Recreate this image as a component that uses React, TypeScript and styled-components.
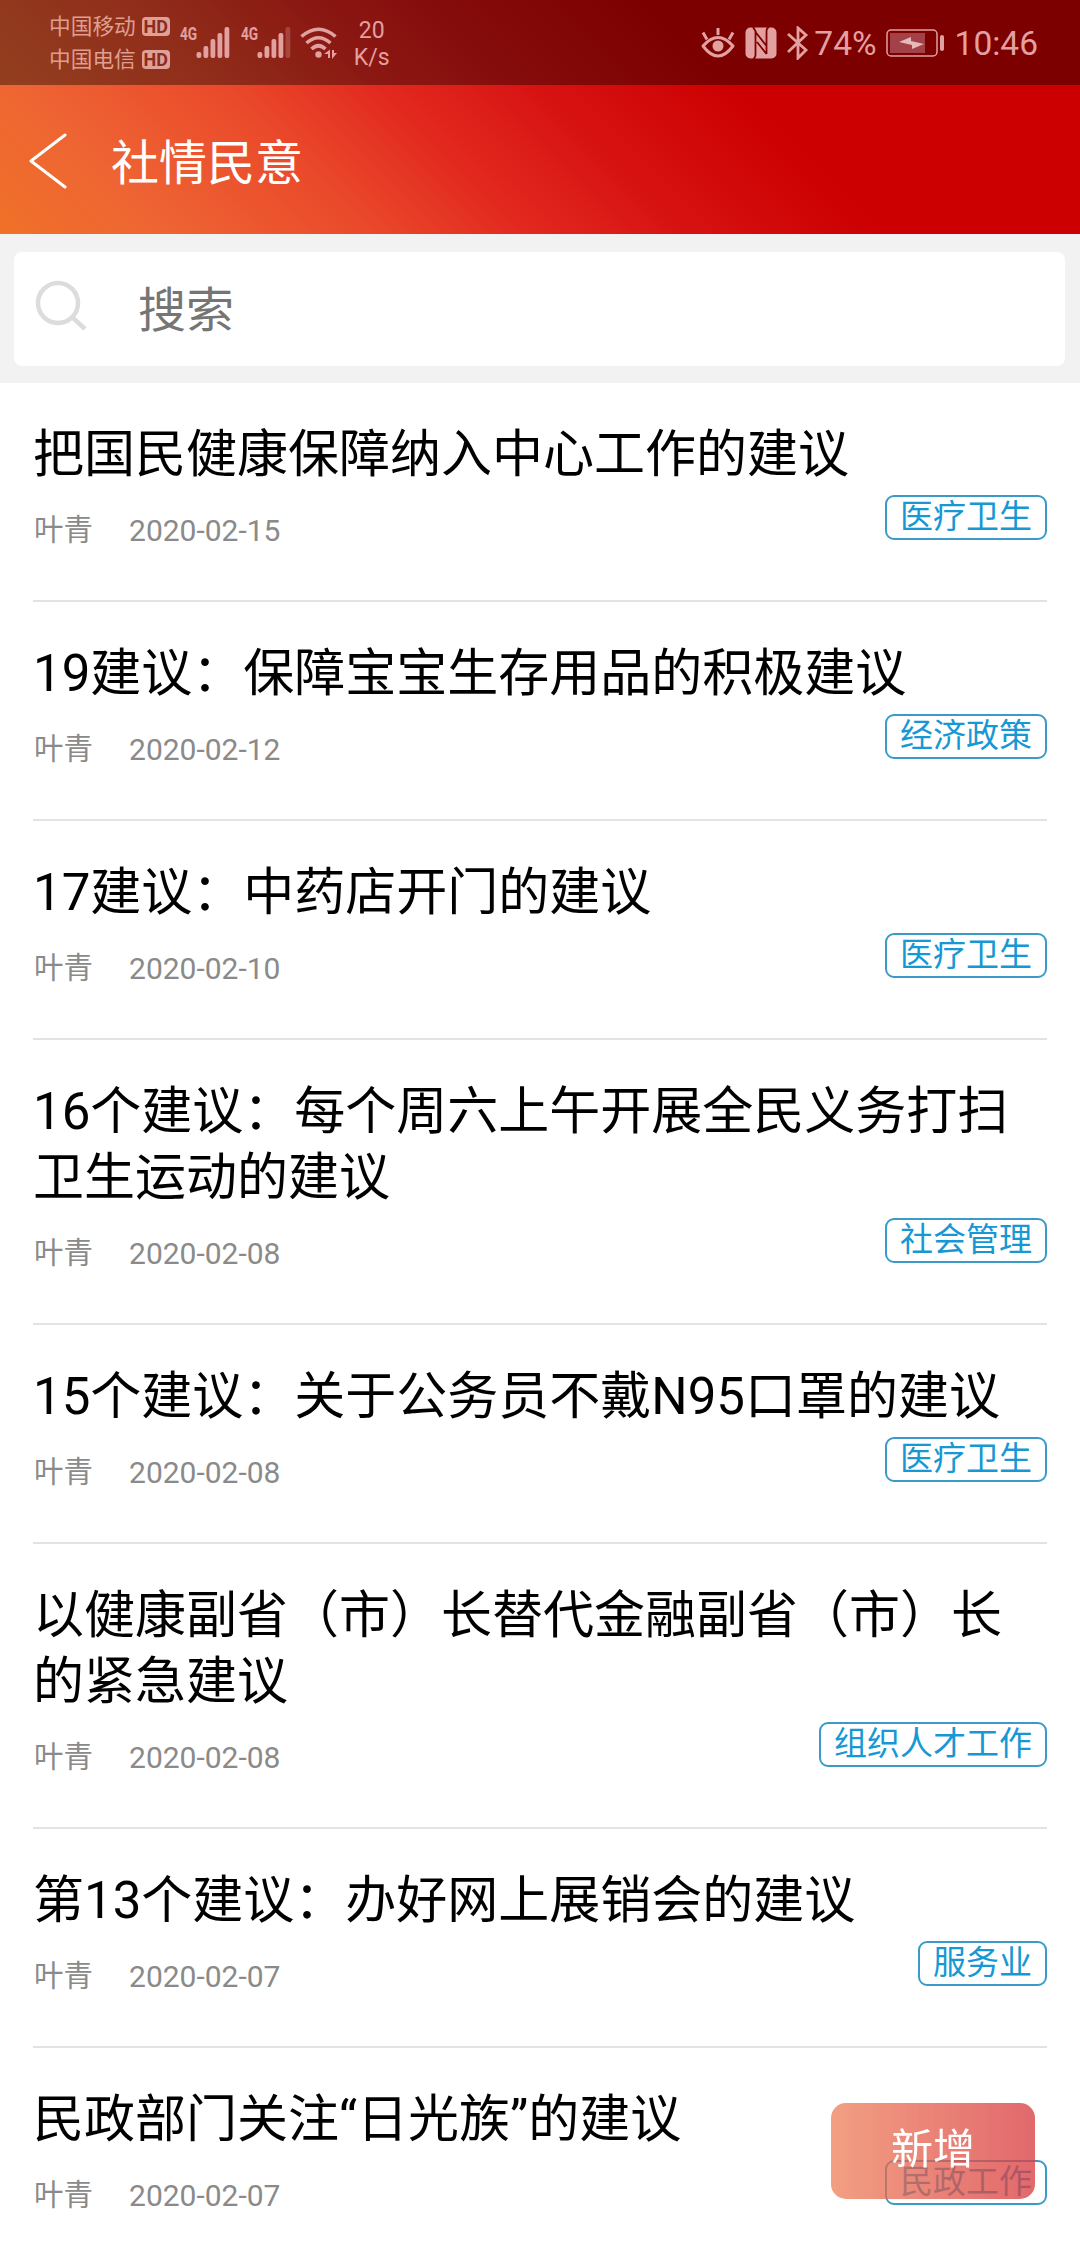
import React from "react";
import styled, { createGlobalStyle } from "styled-components";

const Global = createGlobalStyle`
  body {
    margin: 0;
    background: #fff;
    overflow: hidden;
    font-family: Roboto, "Noto Sans CJK SC", sans-serif;
  }
`;

const Screen = styled.div`
  width: 1080px;
  height: 2244px;
  overflow: hidden;
  background: #fff;
`;

const Header = styled.header`
  height: 234px;
  background: linear-gradient(45deg, #f07128 0%, #ee6433 13%, #ea4a2b 28%, #e2291f 40%, #d71312 52%, #cc0000 67%);
`;

const StatusBar = styled.div`
  height: 85px;
  box-sizing: border-box;
  padding: 0 42px 0 49px;
  display: flex;
  align-items: center;
  background: rgba(0, 0, 0, 0.385);
  color: #e2a0a0;
`;

const Carriers = styled.div`
  display: grid;
  row-gap: 1px;
  padding-top: 2px;
  margin-right: 10px;
`;

const Carrier = styled.div`
  display: flex;
  align-items: center;
  gap: 6px;
  height: 32px;
  font-size: 21.7px;
  line-height: 32px;
  color: #df9f90;
`;

const Badge = styled.span`
  width: 28px;
  height: 19px;
  margin-bottom: 2px;
  border-radius: 4px;
  background: #dfa097;
  color: #8b2c20;
  font-size: 18px;
  line-height: 20px;
  font-weight: 700;
  text-align: center;
`;

const Speed = styled.div`
  width: 36px;
  margin-left: 16px;
  padding-top: 2px;
  font-size: 23px;
  line-height: 27px;
  text-align: center;
`;

const Spacer = styled.div`
  flex: 1;
`;

const StatusText = styled.span<{ $gap: number }>`
  font-size: 33.5px;
  line-height: 40px;
  margin-left: ${(p) => p.$gap}px;
  padding-top: 2px;
`;

const StatusIcon = styled.svg<{ $gap?: number }>`
  display: block;
  flex: none;
  margin-left: ${(p) => p.$gap ?? 0}px;
`;

const TitleBar = styled.div`
  height: 149px;
  display: flex;
  align-items: center;
  padding-left: 28px;
`;

const BackIcon = styled.svg`
  display: block;
  margin: 3px 43px 0 0;
`;

const PageTitle = styled.h1`
  margin: 0;
  padding-top: 8px;
  font-size: 48px;
  line-height: 60px;
  font-weight: 400;
  color: #fff;
`;

const SearchArea = styled.div`
  height: 149px;
  box-sizing: border-box;
  padding: 18px 15px 17px 14px;
  background: #f2f2f2;
`;

const SearchBox = styled.div`
  height: 114px;
  border-radius: 8px;
  background: #fff;
  display: flex;
  align-items: center;
  padding-left: 21px;
`;

const SearchIcon = styled.svg`
  display: block;
  margin: 0 51px 8px 0;
`;

const Placeholder = styled.span`
  padding-top: 3px;
  color: #757575;
  font-size: 48px;
  line-height: 60px;
`;

const List = styled.ul`
  margin: 0;
  padding: 0 33px;
  list-style: none;
`;

const Item = styled.li`
  box-sizing: border-box;
  border-bottom: 2px solid #e3e3e3;
  padding: 39px 0 57px;
`;

const ItemTitle = styled.h2`
  margin: 0;
  font-size: 51px;
  line-height: 66px;
  font-weight: 400;
  color: #000;
`;

const Meta = styled.div`
  height: 55px;
  display: flex;
  align-items: flex-start;
  color: #8a8a8a;
  font-size: 29.5px;
  line-height: 36px;
`;

const Author = styled.span`
  padding-top: 24px;
  padding-left: 1px;
  margin-right: 36px;
`;

const DateText = styled.span`
  flex: 1;
  padding-top: 25px;
  font-size: 30px;
`;

const Tag = styled.span`
  box-sizing: border-box;
  height: 45px;
  margin-top: 7px;
  padding: 0 13px;
  border: 2px solid #3a9bc8;
  border-radius: 9px;
  font-size: 33px;
  line-height: 39px;
  color: #1798d4;
`;

const AddButton = styled.button`
  position: fixed;
  left: 831px;
  top: 2103px;
  width: 204px;
  height: 96px;
  padding: 0 0 3px;
  border: 0;
  border-radius: 15px;
  background: linear-gradient(90deg, rgba(238, 122, 82, 0.72), rgba(217, 62, 66, 0.78));
  color: #fff;
  font: 400 42px/60px Roboto, "Noto Sans CJK SC", sans-serif;
`;

type Entry = { title: string; date: string; tag: string };

const entries: Entry[] = [
  { title: "把国民健康保障纳入中心工作的建议", date: "2020-02-15", tag: "医疗卫生" },
  { title: "19建议：保障宝宝生存用品的积极建议", date: "2020-02-12", tag: "经济政策" },
  { title: "17建议：中药店开门的建议", date: "2020-02-10", tag: "医疗卫生" },
  { title: "16个建议：每个周六上午开展全民义务打扫卫生运动的建议", date: "2020-02-08", tag: "社会管理" },
  { title: "15个建议：关于公务员不戴N95口罩的建议", date: "2020-02-08", tag: "医疗卫生" },
  { title: "以健康副省（市）长替代金融副省（市）长的紧急建议", date: "2020-02-08", tag: "组织人才工作" },
  { title: "第13个建议：办好网上展销会的建议", date: "2020-02-07", tag: "服务业" },
  { title: "民政部门关注“日光族”的建议", date: "2020-02-07", tag: "民政工作" },
];

const SignalText = styled.span`
  font-size: 18px;
  line-height: 18px;
  font-weight: 700;
  transform: scaleX(0.76);
  transform-origin: left;
  width: 16px;
  margin-bottom: 17px;
`;

const SignalGroup = styled.div`
  display: flex;
  align-items: center;
  margin-right: 11px;
`;

function Signal({ weak }: { weak?: boolean }) {
  const bars = [
    [0, 25, 6],
    [7, 19, 12],
    [14, 12, 19],
    [21, 6, 25],
    [28, 0, 31],
  ];
  return (
    <SignalGroup>
      <SignalText>4G</SignalText>
      <StatusIcon width="34" height="31" viewBox="0 0 34 31" fill="currentColor">
        {bars.map(([x, y, h], i) => (
          <rect key={x} x={x + 0.5} y={y} width="4.8" height={h} rx="2" opacity={weak && i === 4 ? 0.3 : 1} />
        ))}
      </StatusIcon>
    </SignalGroup>
  );
}

export default function App() {
  return (
    <Screen>
      <Global />
      <Header>
        <StatusBar>
          <Carriers>
            <Carrier>中国移动<Badge>HD</Badge></Carrier>
            <Carrier>中国电信<Badge>HD</Badge></Carrier>
          </Carriers>
          <Signal />
          <Signal weak />
          <StatusIcon $gap={-2} width="38" height="32" viewBox="0 0 38 32" fill="none" stroke="currentColor" strokeWidth="3.600">
            <path d="M1.500 9.500Q18.500-5 35.500 9.500M6.500 16Q18.500 5.500 30.500 16M11.500 22Q18.500 15.500 25.500 22" />
            <circle cx="18.500" cy="27.500" r="3.200" fill="currentColor" stroke="none" />
            <path d="M24 27l6-4.500v8.500h-2v-4zM37 26l-5 6v-9h2v3z" fill="currentColor" stroke="none" />
          </StatusIcon>
          <Speed>20<br />K/s</Speed>
          <Spacer />
          <StatusIcon width="34" height="30" viewBox="0 0 34 30" fill="none" stroke="currentColor" strokeWidth="3">
            <path d="M2 18Q17 1 32 18Q17 38 2 18Z" strokeLinejoin="round" />
            <circle cx="17" cy="18" r="5.500" fill="currentColor" stroke="none" />
            <path d="M17 0v7M2 4.500l4 7M32 4.500l-4 7" />
          </StatusIcon>
          <StatusIcon $gap={10} width="32" height="32" viewBox="0 0 32 32">
            <rect x="0.500" y="0.500" width="31" height="31" rx="5" fill="currentColor" />
            <path d="M8 32q2.500-1 2.500-4V5L21.500 19V27M21.500 27L12 15M8 0l3 5M24 0q-2.500 1-2.500 4V19" fill="none" stroke="#7e0000" strokeWidth="1.800" />
          </StatusIcon>
          <StatusIcon $gap={10} width="22" height="34" viewBox="0 0 22 34" fill="none" stroke="currentColor" strokeWidth="2.800">
            <path d="M1 8l18 16-8 8V2l8 7L1 26" />
          </StatusIcon>
          <StatusText $gap={5}>74%</StatusText>
          <StatusIcon $gap={9} width="60" height="30" viewBox="0 0 60 30">
            <rect x="1" y="2" width="50" height="26" rx="4" fill="none" stroke="currentColor" strokeWidth="1.500" />
            <rect x="4" y="5" width="35" height="20" fill="#a34149" />
            <path d="M13 14l12-5v4l13 3-12 5v-4z" fill="#e8b9b9" />
            <rect x="54" y="7" width="4" height="16" rx="2" fill="currentColor" />
          </StatusIcon>
          <StatusText $gap={9}>10:46</StatusText>
        </StatusBar>
        <TitleBar>
          <BackIcon width="40" height="56" viewBox="0 0 40 56" fill="none" stroke="#fff" strokeWidth="3" strokeLinejoin="round" strokeLinecap="round">
            <path d="M37 2L3 28l34 26" />
          </BackIcon>
          <PageTitle>社情民意</PageTitle>
        </TitleBar>
      </Header>
      <SearchArea>
        <SearchBox>
          <SearchIcon width="52" height="52" viewBox="0 0 52 52" fill="none" stroke="#dcdcdc" strokeWidth="4.500">
            <circle cx="23" cy="24" r="20" />
            <path d="M37 38l13 12" />
          </SearchIcon>
          <Placeholder>搜索</Placeholder>
        </SearchBox>
      </SearchArea>
      <List>
        {entries.map((e) => (
          <Item key={e.title}>
            <ItemTitle>{e.title}</ItemTitle>
            <Meta>
              <Author>叶青</Author>
              <DateText>{e.date}</DateText>
              <Tag>{e.tag}</Tag>
            </Meta>
          </Item>
        ))}
      </List>
      <AddButton>新增</AddButton>
    </Screen>
  );
}
